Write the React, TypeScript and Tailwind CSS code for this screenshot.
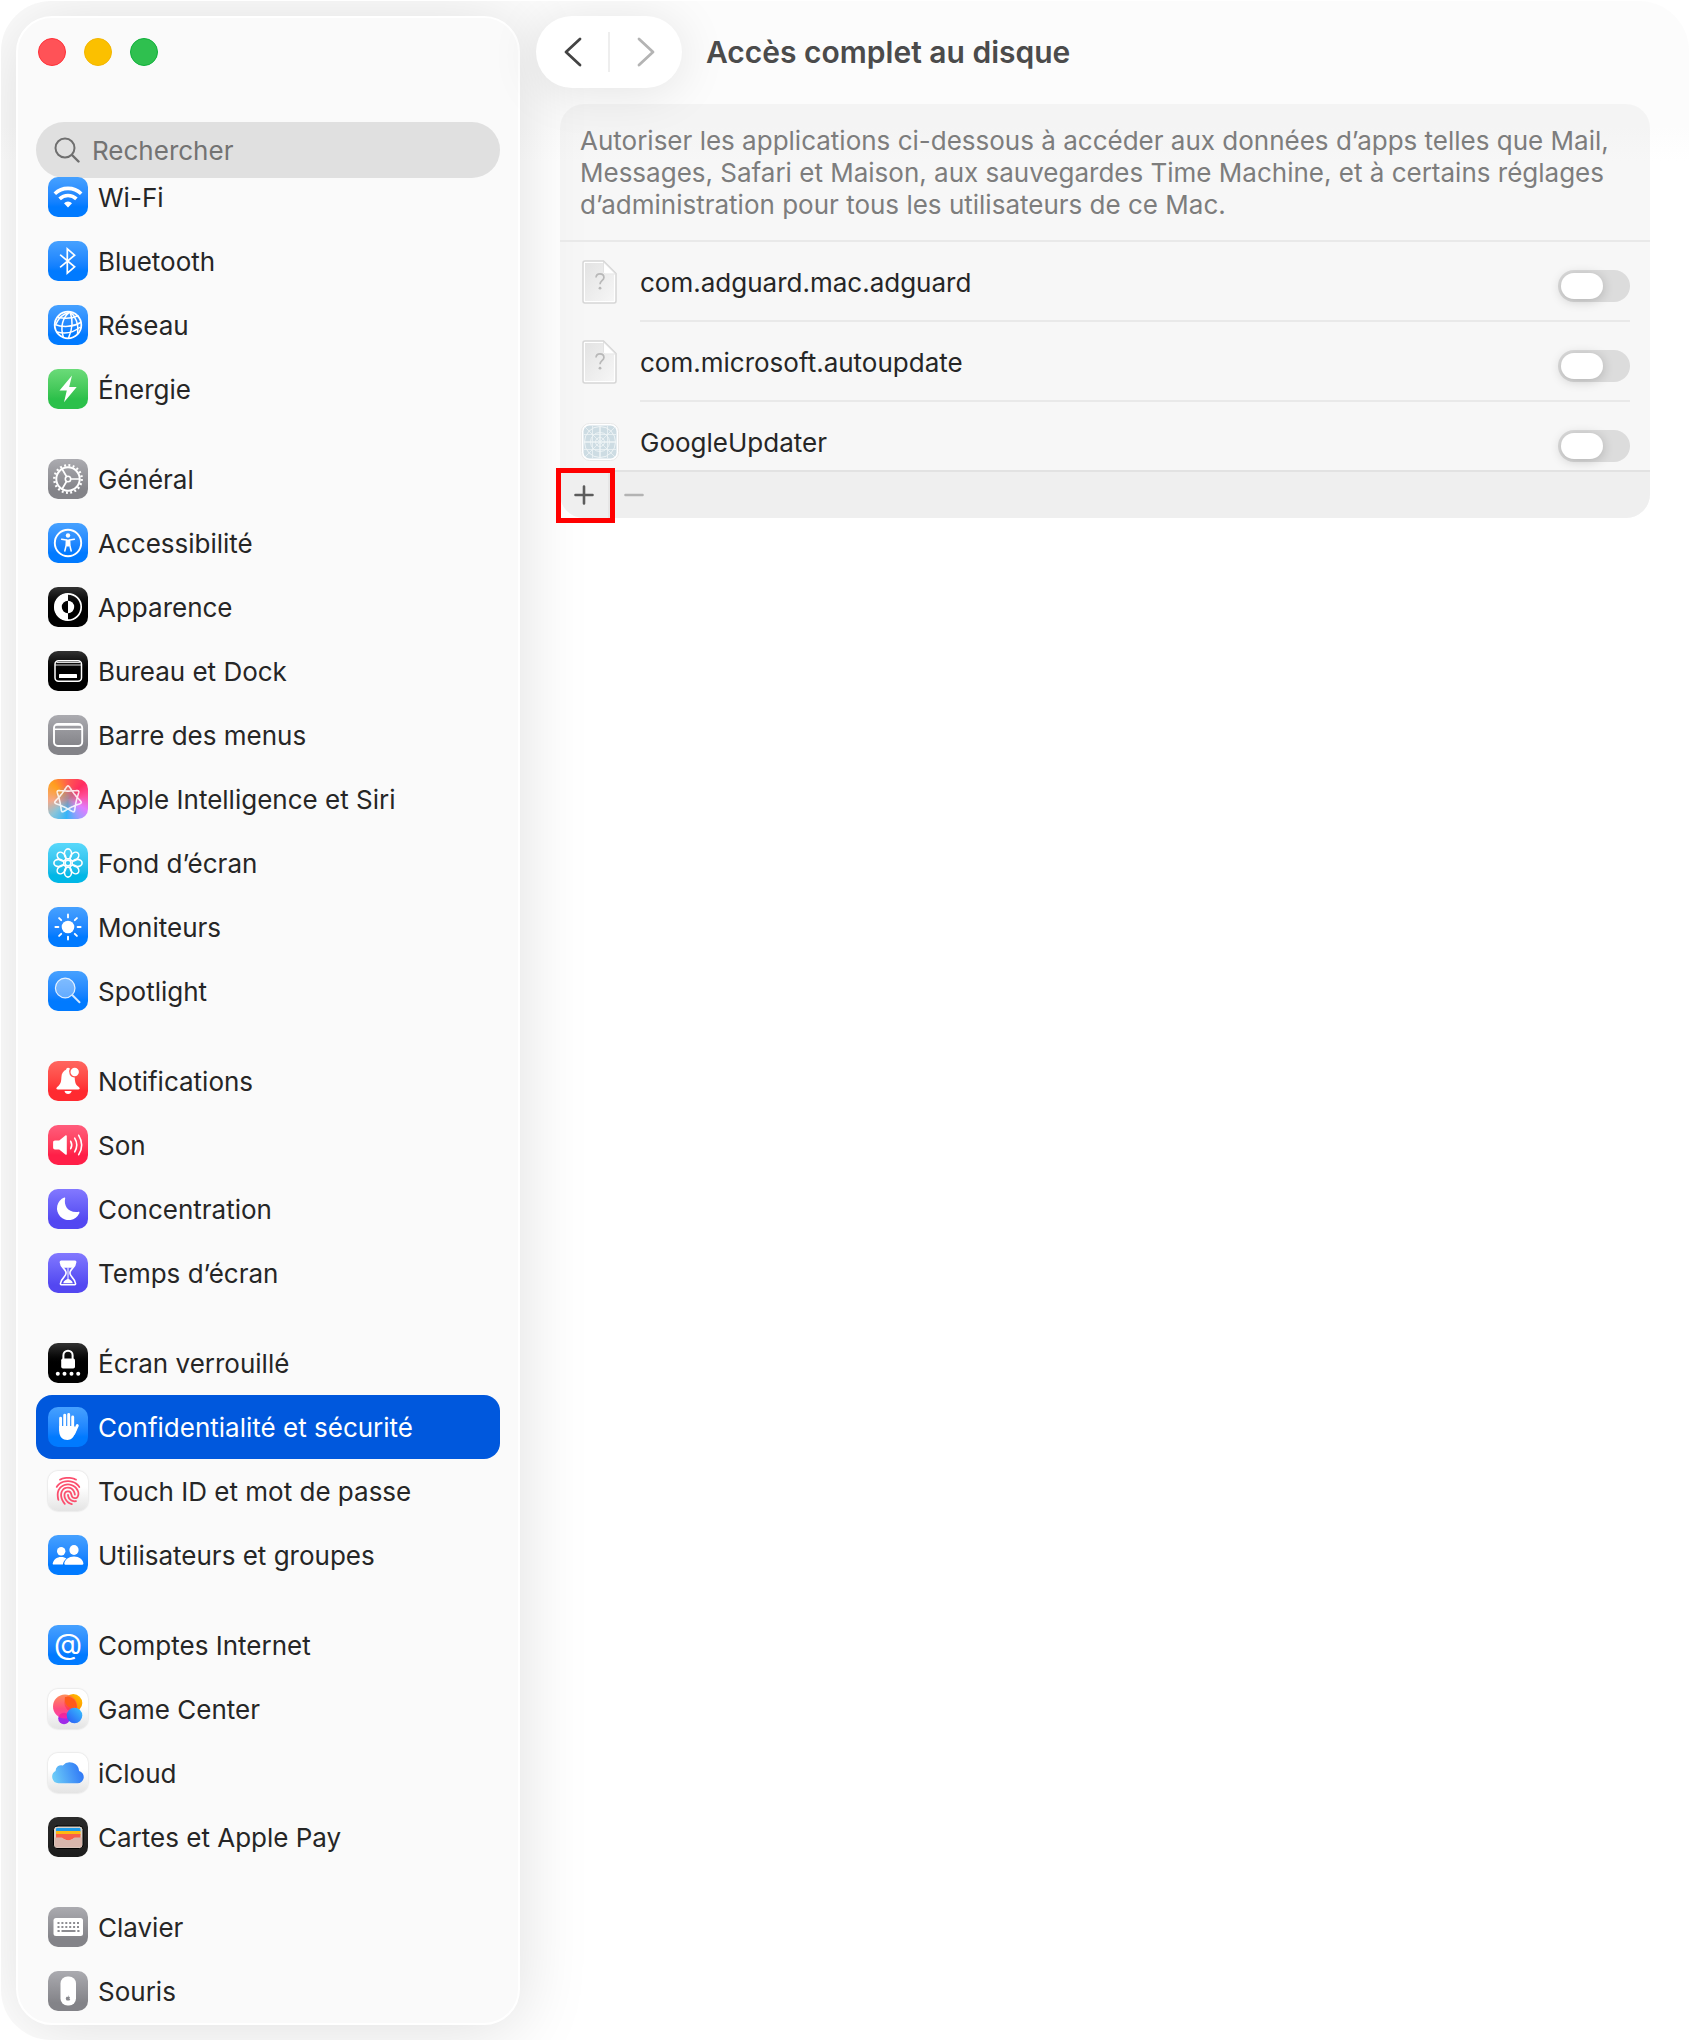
import React, { useState } from 'react';
import { FaApple } from 'react-icons/fa';
import { IoFingerPrint } from 'react-icons/io5';

const BLUE = 'from-[#46a1ff] to-[#007aff] to-75%';
const GREY = 'from-[#ababb0] to-[#838388] to-80%';
const BLACK = 'from-[#333333] to-[#000000] to-60%';
const INDIGO = 'from-[#8378ff] to-[#5347f1] to-80%';
const WHITE = 'from-[#ffffff] from-40% to-[#e4e4e4] shadow-[0_0_2px_rgba(0,0,0,0.2)]';

// Closed curve with seven rounded tips that winds twice around the centre.
const siriPath = (() => {
  const points: string[] = [];
  for (let i = 0; i <= 210; i++) {
    const t = (i / 210) * Math.PI * 2;
    const a = 2 * t - Math.PI / 2;
    const b = -5 * t - Math.PI / 2;
    const x = 20 + 11 * Math.cos(a) + 2.6 * Math.cos(b);
    const y = 20.5 + 11 * Math.sin(a) + 2.6 * Math.sin(b);
    points.push(x.toFixed(2) + ' ' + y.toFixed(2));
  }
  return 'M' + points.join('L') + 'Z';
})();

function Glyph({ children }: { children: React.ReactNode }) {
  return (
    <svg viewBox="0 0 40 40" className="size-10" fill="none" stroke="none" strokeLinecap="round" strokeLinejoin="round" aria-hidden="true">
      {children}
    </svg>
  );
}

const glyphs: Record<string, React.ReactNode> = {
  wifi: (
    <Glyph>
      <g stroke="#fff" strokeWidth="3.6" strokeLinecap="butt">
        <path d="M6.8 16.8a18.8 18.8 0 0 1 26.4 0" />
        <path d="M11.6 21.9a12 12 0 0 1 16.8 0" />
      </g>
      <path d="M20 30.4l-4-4.2a5.8 5.8 0 0 1 8 0z" fill="#fff" />
    </Glyph>
  ),
  bluetooth: (
    <Glyph>
      <path d="M12.6 14.2l14 11.6-7.3 6.4V7.8l7.3 6.4-14 11.6" stroke="#fff" strokeWidth="1.7" strokeLinejoin="miter" />
    </Glyph>
  ),
  network: (
    <Glyph>
      <g stroke="#fff" strokeWidth="1.5">
        <circle cx="20" cy="20" r="13.3" strokeWidth="1.8" />
        <path d="M22 6.9c-7.500 5.500-10 15-6.600 25.500M22 6.900c3 7.500 2.600 17-1.500 26.200M22 6.900c5.500 4 9 12 7.500 22M22 6.900c-6 1.500-11.500 6-14 12" />
        <path d="M9.500 12.200c6.500 1.600 14 1.500 20.500-1.500M6.800 19.500c8 3 18.500 2.500 25.900-2M9 27c7 1.800 16 1 22.500-4.500" />
      </g>
    </Glyph>
  ),
  energy: (
    <Glyph>
      <path d="M24 6.500L11.500 21.500h7.300L16 33.200 28.700 18h-7.500z" fill="#fff" />
    </Glyph>
  ),
  general: (
    <Glyph>
      <g stroke="#fff">
        <circle cx="20" cy="20" r="13.700" strokeWidth="2.400" strokeDasharray="1.900 2.404" strokeLinecap="butt" />
        <circle cx="20" cy="20" r="11.700" strokeWidth="1.900" />
        <circle cx="20" cy="20" r="2.700" strokeWidth="1.600" />
        <path d="M22.900 20h8.500M18.500 17.500l-4.400-7.500M18.500 22.500l-4.400 7.500" strokeWidth="1.700" />
      </g>
    </Glyph>
  ),
  accessibility: (
    <Glyph>
      <circle cx="20" cy="20" r="13.200" stroke="#fff" strokeWidth="1.900" />
      <circle cx="20" cy="12.500" r="2.200" fill="#fff" />
      <path d="M13.600 16.200l4.800.8v4.500L16.800 28M26.400 16.200l-4.800.8v4.500l1.600 6.500" stroke="#fff" strokeWidth="1.500" />
      <path d="M18 16.500h4l.3 5.500-1.200 1.500h-2.200L17.700 22z" fill="#fff" />
    </Glyph>
  ),
  appearance: (
    <Glyph>
      <circle cx="20" cy="20" r="13.200" stroke="#fff" strokeWidth="1.700" />
      <path d="M20 6.500a13.500 13.500 0 0 0 0 27v-7.300a6.200 6.200 0 0 1 0-12.400z" fill="#fff" />
      <path d="M20 13.800a6.200 6.200 0 0 1 0 12.400z" fill="#fff" />
    </Glyph>
  ),
  dock: (
    <Glyph>
      <rect x="7" y="9.800" width="26.500" height="20.400" rx="3.500" stroke="#fff" strokeWidth="1.500" />
      <path d="M7.500 14h25.500M9 11.500h22.500" stroke="#fff" strokeWidth="1.200" opacity=".85" />
      <rect x="11" y="23" width="18" height="4" rx=".6" fill="#fff" />
    </Glyph>
  ),
  menubar: (
    <Glyph>
      <rect x="6" y="9" width="28.200" height="22" rx="4" stroke="#fff" strokeWidth="1.900" />
      <path d="M7 10.800a4 4 0 0 1 3-1.600h20a4 4 0 0 1 3 1.600z" fill="#fff" />
      <path d="M6.500 14.200h27" stroke="#fff" strokeWidth="1.600" />
    </Glyph>
  ),
  siri: (
    <Glyph>
      <path d={siriPath} stroke="#fff" strokeWidth="1.600" opacity=".85" />
    </Glyph>
  ),
  wallpaper: (
    <Glyph>
      <g stroke="#fff" strokeWidth="1.600">
        {[0, 45, 90, 135, 180, 225, 270, 315].map((angle) => (
          <ellipse key={angle} cx="20" cy="10.900" rx="3.600" ry="5" transform={`rotate(${angle} 20 20)`} />
        ))}
        <circle cx="20" cy="20" r="2.900" />
      </g>
    </Glyph>
  ),
  displays: (
    <Glyph>
      <circle cx="20" cy="20" r="6.300" fill="#fff" />
      <path d="M20 7.400v3M20 29.600v3M7.400 20h3M29.600 20h3M11.100 11.100l2.100 2.100M26.800 26.800l2.100 2.100M11.100 28.900l2.100-2.100M26.800 13.200l2.100-2.100" stroke="#fff" strokeWidth="1.900" />
    </Glyph>
  ),
  spotlight: (
    <Glyph>
      <circle cx="17.200" cy="17" r="9.800" fill="#fff" fillOpacity=".35" stroke="#fff" strokeOpacity=".85" strokeWidth="1.200" />
      <path d="M24.500 24.300l7 7" stroke="#d5e9ff" strokeWidth="2" />
    </Glyph>
  ),
  notifications: (
    <Glyph>
      <path d="M20 6.800c.8 0 1.500.3 1.900.8a5.800 5.800 0 0 0 4.800 8.900c.2 5.700 1.400 7.500 4.100 9.600 1.600 1.300 1 2.400-.7 2.400H10c-1.800 0-2.300-1.200-.8-2.400 3-2.400 4-4.200 4.200-9.800.1-3.800 2.100-6.600 4.600-7.500.3-1.300 1-2 2-2z" fill="#fff" />
      <circle cx="26.700" cy="11" r="4.200" fill="#fff" />
      <path d="M16.500 30.100h7.200c-.5 1.900-1.800 3-3.600 3s-3.200-1.100-3.600-3z" fill="#fff" />
    </Glyph>
  ),
  sound: (
    <Glyph>
      <path d="M7 15.500h4.200l6.200-5.100c.6-.5 1.400-.2 1.400.7v17.800c0 .9-.8 1.200-1.400.7l-6.200-5.100H7c-1.200 0-1.900-.7-1.900-1.900v-5.200c0-1.200.7-1.900 1.900-1.900z" fill="#fff" />
      <path d="M22.700 16.300a7.500 7.500 0 0 1 0 7.400M26.700 13.200a13 13 0 0 1 0 13.600M30.700 10.300a18.500 18.500 0 0 1 0 19.400" stroke="#fff" strokeWidth="1.600" />
    </Glyph>
  ),
  focus: (
    <Glyph>
      <path d="M16.300 8.500c.6-.3 1.100.1.900.8-1.700 7.200 2.700 14.600 12.700 13.600 1.300-.2 1.900.3 1.400 1.400A11.700 11.700 0 1 1 16.300 8.500z" fill="#fff" />
    </Glyph>
  ),
  screentime: (
    <Glyph>
      <path d="M13.200 8.200h13.600c1 0 .8 1 .8 1-.2 5.500-5.700 6.700-5.700 10.800s5.500 5.300 5.700 10.800c0 1-.8 1-.8 1H13.200c-.8 0-.8-1-.8-1 .2-5.500 5.700-6.700 5.700-10.800s-5.500-5.300-5.700-10.800c0-1 .8-1 .8-1z" stroke="#fff" strokeWidth="1.600" />
      <path d="M12.500 8h15v2.200c-.5 1.700-2 3.500-3.500 4.600h-8c-1.500-1.100-3-2.900-3.500-4.600zM20 18v8c-2.500.5-4.200 1.800-4.800 4.200h9.600c-.6-2.400-2.300-3.700-4.800-4.200z" fill="#fff" />
      <path d="M20 15v12" stroke="#fff" strokeWidth="1" />
    </Glyph>
  ),
  lock: (
    <Glyph>
      <path d="M15.400 16.500v-4.200a4.600 4.600 0 0 1 9.200 0v4.200" stroke="#fff" strokeWidth="2" />
      <rect x="13.200" y="15.400" width="13.800" height="10.200" rx="1.800" fill="#fff" />
      {[9.800, 16.500, 23.500, 30.200].map((x) => (
        <circle key={x} cx={x} cy="30.700" r="2" fill="#fff" />
      ))}
    </Glyph>
  ),
  privacy: (
    <Glyph>
      <g stroke="#fff" strokeWidth="2.900">
        <path d="M12.600 11.300v12M16.700 8.300v12M20.700 7.500v12M24.700 10v14M29.300 18.600l-3.500 7.700" />
      </g>
      <path d="M11.200 19h15l2.300 3.800-1.800 4.300c-1.400 3.600-3.400 5.800-7.200 5.800-4.800 0-8.300-3.200-8.300-9z" fill="#fff" />
    </Glyph>
  ),
  users: (
    <Glyph>
      <g fill="#fff">
        <circle cx="13.200" cy="16.200" r="4.200" />
        <ellipse cx="26" cy="15" rx="4.600" ry="5" />
        <path d="M5.500 29.500c-.6 0-.9-.5-.8-1.100.7-3.800 4-6.500 8.500-6.500 2.300 0 4 .6 5.300 1.700-2.100 1.500-3.400 3.600-3.600 5.900z" />
        <path d="M17.300 29.700c-.7 0-1.100-.5-1-1.200.7-4 4.500-7 9.700-7s9 3 9.400 7c.1.700-.3 1.200-1 1.200z" />
      </g>
    </Glyph>
  ),
  at: <span className="-mt-1 text-[29px] leading-none text-white">@</span>,
  gamecenter: (
    <Glyph>
      <defs>
        <linearGradient id="gc-red" x1="0" y1="0" x2="0" y2="1">
          <stop offset="0" stopColor="#ff7a3c" />
          <stop offset=".6" stopColor="#ff2d6b" />
          <stop offset="1" stopColor="#ff1fa8" />
        </linearGradient>
        <linearGradient id="gc-yellow" x1="1" y1="0" x2="0" y2="1">
          <stop offset="0" stopColor="#ffc400" />
          <stop offset="1" stopColor="#ff6a00" />
        </linearGradient>
        <linearGradient id="gc-blue" x1="1" y1="0" x2="0" y2="1">
          <stop offset="0" stopColor="#38c6ff" />
          <stop offset="1" stopColor="#2a55f5" />
        </linearGradient>
      </defs>
      <circle cx="16" cy="29.500" r="5.800" fill="#a02be8" />
      <circle cx="25.300" cy="14" r="9" fill="url(#gc-yellow)" />
      <circle cx="17" cy="17.500" r="12" fill="url(#gc-red)" opacity=".85" />
      <path d="M17 8a9 9 0 0 1 11 11 9 9 0 0 1-11-11z" fill="#ff5a1a" />
      <circle cx="26.500" cy="26.500" r="7.800" fill="url(#gc-blue)" />
    </Glyph>
  ),
  icloud: (
    <Glyph>
      <defs>
        <linearGradient id="cloud" x1="0" y1=".5" x2="1" y2=".3">
          <stop offset="0" stopColor="#6ccbf8" />
          <stop offset="1" stopColor="#2b72f6" />
        </linearGradient>
      </defs>
      <path d="M10.500 30.200A6.500 6.500 0 0 1 7.600 18a5.600 5.600 0 0 1 7.200-5.600 9.400 9.400 0 0 1 16.300 5.600 6.200 6.200 0 0 1-1.600 12.200z" fill="url(#cloud)" />
    </Glyph>
  ),
  wallet: (
    <Glyph>
      <rect x="5.500" y="9" width="29.500" height="22.500" rx="3.500" fill="#d9d2c9" stroke="#000" strokeWidth="1" />
      <rect x="8" y="11" width="24.500" height="4" rx="1" fill="#1e9be8" />
      <rect x="8" y="14" width="24.500" height="4" fill="#fdb913" />
      <rect x="8" y="17" width="24.500" height="5" fill="#f8604a" />
      <path d="M6.500 20.500h7c2 0 3.300 3 6.700 3s4.700-3 6.700-3H34v7.500a2.500 2.500 0 0 1-2.500 2.500H9A2.500 2.500 0 0 1 6.500 28z" fill="#d8b6ac" />
      <path d="M14.500 20.200h11.500c-1.500 1.200-3 3.100-5.800 3.100s-4.200-1.900-5.700-3.100z" fill="#f8604a" />
    </Glyph>
  ),
  keyboard: (
    <Glyph>
      <rect x="5.500" y="11" width="29.500" height="18" rx="2.500" fill="#fff" />
      <g stroke="#8c8c91" strokeWidth="1.900" strokeLinecap="butt">
        <path d="M9.500 16h22M9.500 20h22" strokeDasharray="2 1.900" />
        <path d="M9.500 24h2.200M13.500 24h14M29.300 24h2.200" />
      </g>
    </Glyph>
  ),
  mouse: (
    <Glyph>
      <rect x="12.500" y="5.500" width="15.500" height="29" rx="7" fill="#fff" />
      <FaApple x={17} y={24} size={6} color="#8a8a8f" />
    </Glyph>
  ),
  touchid: <IoFingerPrint className="size-[30px] text-[#fb4f6e]" aria-hidden="true" />,
};

type Entry = { icon: string; label: string; tile: string };

const groups: Entry[][] = [
  [
    { icon: 'wifi', label: 'Wi-Fi', tile: BLUE },
    { icon: 'bluetooth', label: 'Bluetooth', tile: BLUE },
    { icon: 'network', label: 'Réseau', tile: BLUE },
    { icon: 'energy', label: 'Énergie', tile: 'from-[#6adb79] to-[#2bc04a] to-75%' },
  ],
  [
    { icon: 'general', label: 'Général', tile: GREY },
    { icon: 'accessibility', label: 'Accessibilité', tile: BLUE },
    { icon: 'appearance', label: 'Apparence', tile: BLACK },
    { icon: 'dock', label: 'Bureau et Dock', tile: BLACK },
    { icon: 'menubar', label: 'Barre des menus', tile: GREY },
    {
      icon: 'siri',
      label: 'Apple Intelligence et Siri',
      tile: 'bg-[radial-gradient(circle_at_48%_48%,#a98a9a_0%,transparent_45%),conic-gradient(from_0deg,#ff5a50,#ff2d60_45deg,#ff4f9c_80deg,#e07cff_120deg,#9a9cff_150deg,#35b5f8_185deg,#8cc4d8_225deg,#f5a888_265deg,#ff9f1e_315deg,#ff5a50)]',
    },
    { icon: 'wallpaper', label: 'Fond d’écran', tile: 'from-[#58d8fb] to-[#00b7e6] to-80%' },
    { icon: 'displays', label: 'Moniteurs', tile: BLUE },
    { icon: 'spotlight', label: 'Spotlight', tile: BLUE },
  ],
  [
    { icon: 'notifications', label: 'Notifications', tile: 'from-[#ff665f] to-[#ff2a30] to-75%' },
    { icon: 'sound', label: 'Son', tile: 'from-[#ff5c7c] to-[#ff1f48] to-75%' },
    { icon: 'focus', label: 'Concentration', tile: INDIGO },
    { icon: 'screentime', label: 'Temps d’écran', tile: INDIGO },
  ],
  [
    { icon: 'lock', label: 'Écran verrouillé', tile: BLACK },
    { icon: 'privacy', label: 'Confidentialité et sécurité', tile: BLUE },
    { icon: 'touchid', label: 'Touch ID et mot de passe', tile: WHITE },
    { icon: 'users', label: 'Utilisateurs et groupes', tile: BLUE },
  ],
  [
    { icon: 'at', label: 'Comptes Internet', tile: BLUE },
    { icon: 'gamecenter', label: 'Game Center', tile: WHITE },
    { icon: 'icloud', label: 'iCloud', tile: WHITE },
    { icon: 'wallet', label: 'Cartes et Apple Pay', tile: 'from-[#2b2b2b] to-[#1c1c1c]' },
  ],
  [
    { icon: 'keyboard', label: 'Clavier', tile: GREY },
    { icon: 'mouse', label: 'Souris', tile: GREY },
  ],
];

function Sidebar() {
  const [active, setActive] = useState('privacy');
  return (
    <aside className="w-[504px] shrink-0 overflow-clip rounded-[36px] border-2 border-white bg-[#fafafa] px-[18px] shadow-[0_6px_70px_rgba(0,0,0,0.13)]">
      <div className="flex gap-[18px] pt-5 pl-[2px]">
        <button aria-label="Fermer" className="size-7 rounded-full border border-[#ff3038] bg-[#ff5257]" />
        <button aria-label="Réduire" className="size-7 rounded-full border border-[#f2b500] bg-[#fbc000]" />
        <button aria-label="Agrandir" className="size-7 rounded-full border border-[#0fb03a] bg-[#2fc04f]" />
      </div>
      <label className="mt-14 flex h-14 items-center gap-3 rounded-full bg-[#e0e0e0] pl-[18px] text-[#6f6f6f]">
        <svg viewBox="0 0 26 26" className="size-[26px]" fill="none" stroke="currentColor" strokeWidth="2" strokeLinecap="round" aria-hidden="true">
          <circle cx="11" cy="11" r="9.500" />
          <path d="M18 18l6.500 6.500" strokeWidth="2.400" />
        </svg>
        <input
          type="search"
          aria-label="Rechercher"
          placeholder="Rechercher"
          className="min-w-0 flex-1 bg-transparent pt-[2px] outline-none placeholder:text-[#737373]"
        />
      </label>
      <nav className="-mt-[13px] flex flex-col gap-[26px]">
        {groups.map((group) => (
          <ul key={group[0].icon}>
            {group.map(({ icon, label, tile }) => (
              <li key={icon}>
                <a
                  href={'#' + icon}
                  onClick={() => setActive(icon)}
                  aria-current={active === icon ? 'page' : undefined}
                  className={
                    'flex h-16 items-center gap-[10px] rounded-2xl pl-3 ' +
                    (active === icon ? 'bg-[#0058dd] text-white' : 'text-[#262626]')
                  }
                >
                  <span className={'flex size-10 shrink-0 items-center justify-center rounded-[10px] bg-linear-to-b ' + tile}>
                    {glyphs[icon]}
                  </span>
                  <span className="pt-[2px]">{label}</span>
                </a>
              </li>
            ))}
          </ul>
        ))}
      </nav>
    </aside>
  );
}

function DocumentIcon() {
  return (
    <svg viewBox="0 0 40 48" className="h-12 w-10" aria-hidden="true">
      <defs>
        <linearGradient id="sheet" x1="0" y1="0" x2="1" y2="1">
          <stop offset="0" stopColor="#e3e3e3" />
          <stop offset="1" stopColor="#f6f6f6" />
        </linearGradient>
      </defs>
      <path d="M5 3h18.500L36 15.500V43a2 2 0 0 1-2 2H5a2 2 0 0 1-2-2V5a2 2 0 0 1 2-2z" fill="#fff" stroke="#d6d6d6" strokeWidth="1.500" />
      <path d="M5 5h18v11.500h11V43H5z" fill="url(#sheet)" />
      <path d="M23.500 4v10.500a1.500 1.500 0 0 0 1.500 1.500h10.500z" fill="#fff" stroke="#dcdcdc" strokeWidth=".8" />
      <path d="M16 19.500c.2-2.400 1.600-3.700 3.900-3.700s4 1.400 4 3.600c0 3.300-3.900 3.300-3.900 6.800" fill="none" stroke="#b8b8b8" strokeWidth="1.700" />
      <circle cx="20" cy="30.200" r="1.400" fill="#b8b8b8" />
    </svg>
  );
}

function BlueprintIcon() {
  return (
    <svg viewBox="0 0 40 40" className="size-10" fill="none" aria-hidden="true">
      <rect x="1.500" y="1.500" width="37" height="37" rx="8" fill="#fff" stroke="#e8e8e8" />
      <rect x="3.500" y="3.500" width="33" height="33" rx="6" fill="#cddce3" />
      <g stroke="#eef4f6" strokeWidth="1">
        <path d="M4 20h32M20 4v32" strokeWidth="1.500" />
        <path d="M4 12.500h32M4 27.500h32M12.500 4v32M27.500 4v32M5 5l30 30M35 5L5 35" strokeWidth=".8" />
        <circle cx="20" cy="20" r="4.500" />
        <circle cx="20" cy="20" r="9.500" />
        <circle cx="20" cy="20" r="15.500" />
      </g>
    </svg>
  );
}

const apps = [
  { id: 'adguard', name: 'com.adguard.mac.adguard', icon: <DocumentIcon /> },
  { id: 'autoupdate', name: 'com.microsoft.autoupdate', icon: <DocumentIcon /> },
  { id: 'updater', name: 'GoogleUpdater', icon: <BlueprintIcon /> },
];

function AppList() {
  return (
    <ul className="h-[228px] overflow-hidden">
      {apps.map(({ id, name, icon }) => (
        <li key={id} className="flex h-20 items-stretch gap-5 px-5">
          <span className="flex w-10 items-center justify-center">{icon}</span>
          <div className="flex flex-1 items-center justify-between border-b-2 border-[#e9e9e9] pt-[3px] text-[#262626]">
            <label htmlFor={id}>{name}</label>
            <input
              id={id}
              type="checkbox"
              role="switch"
              className="mt-[6px] h-8 w-[72px] appearance-none rounded-full bg-[#dcdcdc] p-[3px] before:block before:h-[26px] before:w-[42px] before:rounded-full before:bg-white before:shadow-[0_2px_12px_rgba(0,0,0,0.2)] before:content-[''] checked:bg-[#0a7aff] checked:before:ml-6"
            />
          </div>
        </li>
      ))}
    </ul>
  );
}

export default function App() {
  return (
    <div className="min-h-screen bg-white p-px font-['Inter','Noto_Sans',sans-serif] text-[26px] leading-8">
      <div className="flex min-h-[calc(100vh-2px)] items-start overflow-hidden rounded-[50px] bg-[linear-gradient(#fcfcfc_0,#fcfcfc_125px,#ffffff_160px)] p-[15px]">
        <Sidebar />
        <main className="relative min-w-0 flex-1 pl-4">
          <header className="flex items-center gap-6">
            <div className="flex h-[72px] w-[146px] items-center rounded-full bg-white shadow-[0_4px_50px_rgba(0,0,0,0.1)]">
              <button aria-label="Précédent" className="flex h-full flex-1 items-center justify-center">
                <svg viewBox="0 0 20 32" className="h-8 w-5" fill="none" stroke="#444444" strokeWidth="2.800" strokeLinecap="round" strokeLinejoin="round">
                  <path d="M18 3L4 16l14 13" />
                </svg>
              </button>
              <span className="h-10 w-[2px] bg-[#eeeeee]" />
              <button aria-label="Suivant" className="flex h-full flex-1 items-center justify-center">
                <svg viewBox="0 0 20 32" className="h-8 w-5" fill="none" stroke="#b4b4b4" strokeWidth="2.800" strokeLinecap="round" strokeLinejoin="round">
                  <path d="M3 3l14 13L3 29" />
                </svg>
              </button>
            </div>
            <h1 className="text-[30px] font-semibold text-[#4b4b4b]">Accès complet au disque</h1>
          </header>
          <section className="mt-4 mr-6 ml-6 rounded-3xl bg-black/[0.032]">
            <p className="border-b-2 border-[#e9e9e9] px-5 pt-[21px] pb-[19px] text-[#7d7d7d]">
              Autoriser les applications ci-dessous à accéder aux données d’apps telles que Mail, Messages, Safari et Maison, aux
              sauvegardes Time Machine, et à certains réglages d’administration pour tous les utilisateurs de ce Mac.
            </p>
            <AppList />
            <div className="flex h-12 items-center rounded-b-3xl border-t-2 border-[#e2e2e2] bg-[#efefef]">
              <div className="relative flex w-[50px] items-center justify-center self-stretch border-r-2 border-[#e6e6e6]">
                <button aria-label="Ajouter" className="flex size-full items-center justify-center">
                  <svg viewBox="0 0 20 20" className="size-5" stroke="#5c5c5c" strokeWidth="2.600" strokeLinecap="round">
                    <path d="M10 1.500v17M1.500 10h17" />
                  </svg>
                </button>
                <span className="pointer-events-none absolute -top-1 -right-[7px] -bottom-[5px] -left-1 border-[5px] border-[#ff0000]" />
              </div>
              <button aria-label="Supprimer" className="flex w-12 items-center justify-center self-stretch">
                <svg viewBox="0 0 20 20" className="size-5" stroke="#b3b3b3" strokeWidth="2.600" strokeLinecap="round">
                  <path d="M1.500 10h17" />
                </svg>
              </button>
            </div>
          </section>
        </main>
      </div>
    </div>
  );
}
